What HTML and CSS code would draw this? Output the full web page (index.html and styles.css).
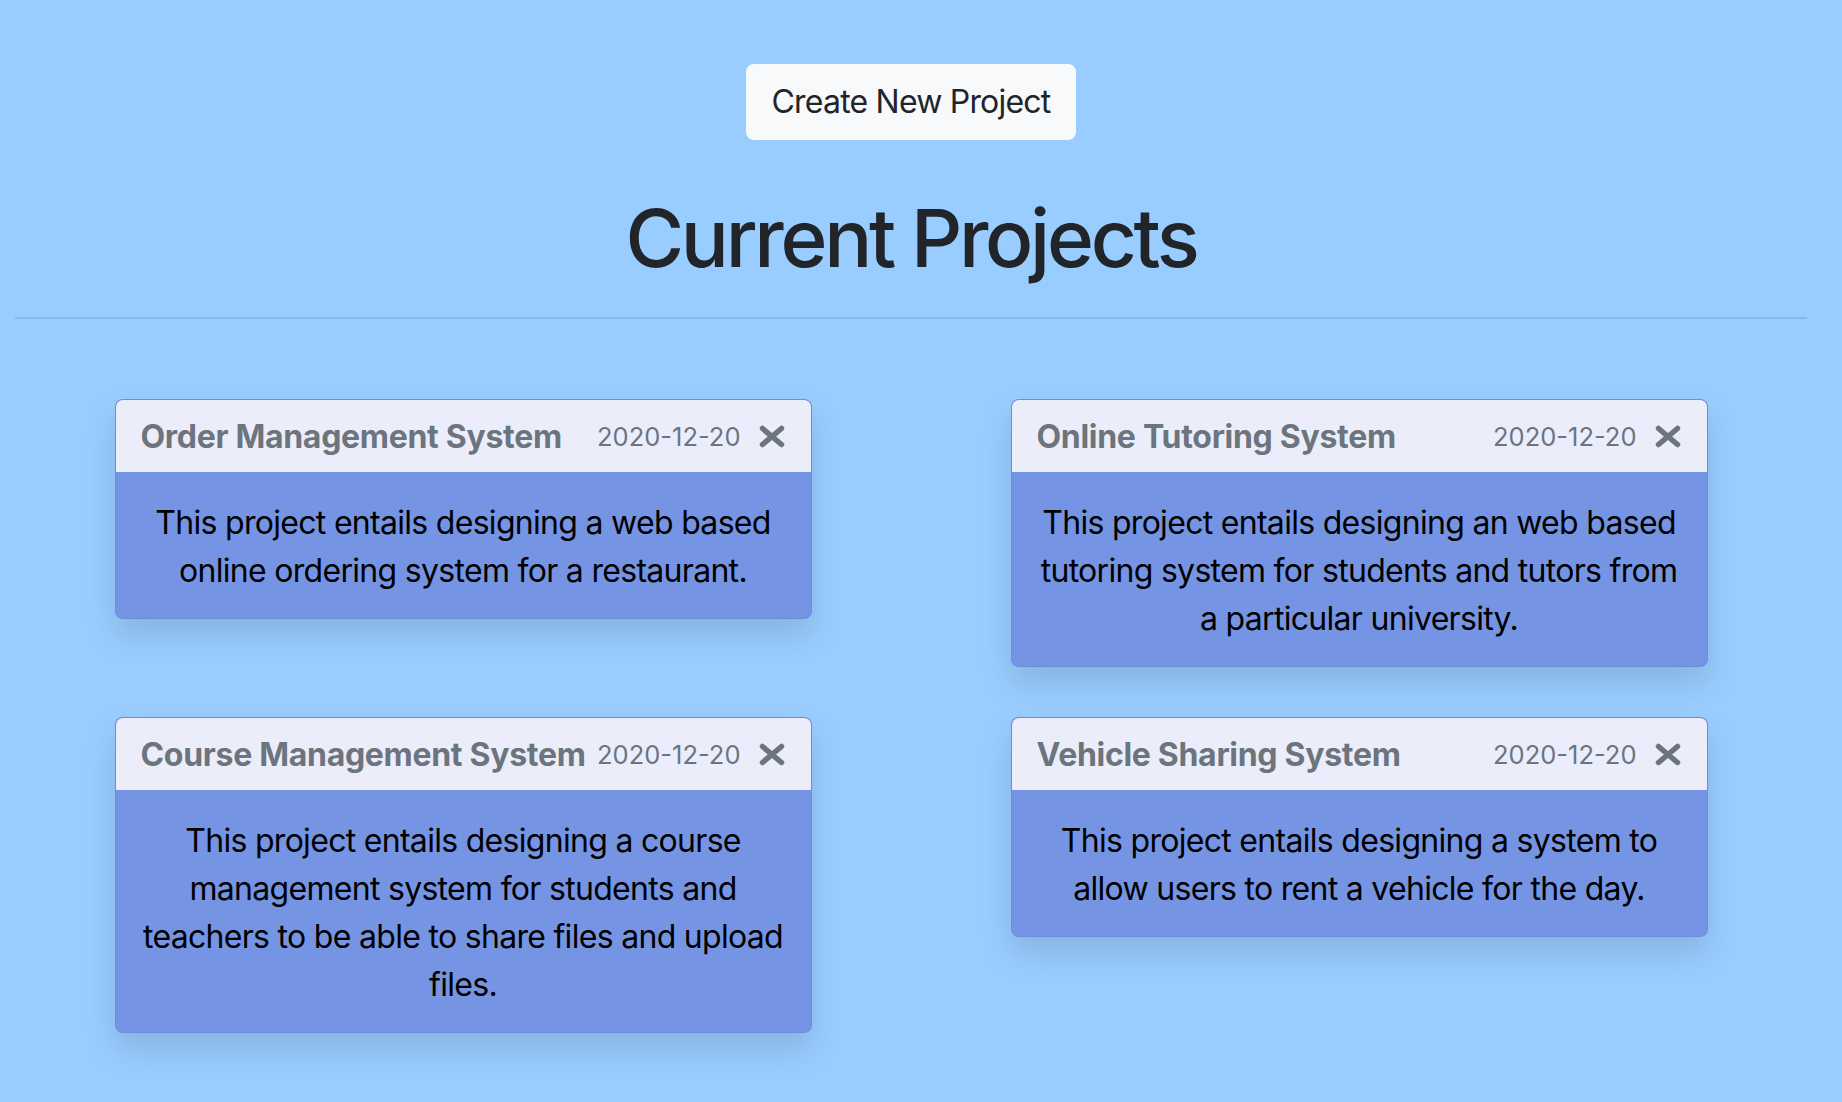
FILE: index.html
```html
<!DOCTYPE html>
<html lang="en">
<head>
<meta charset="utf-8">
<title>Current Projects</title>
<link rel="stylesheet" href="styles.css">
</head>
<body>
<div class="page">
  <div class="top">
    <button class="btn" type="button">Create New Project</button>
  </div>
  <h1 class="title">Current Projects</h1>
  <hr class="rule">
  <div class="grid">
    <div class="card">
      <div class="card-header">
        <span class="card-title">Order Management System</span>
        <span class="card-date">2020-12-20</span>
        <svg class="close" width="26" height="23" viewBox="0 0 26 23"><path d="M3.5 3.5 L22.5 19.5 M22.5 3.5 L3.5 19.5" stroke="#6c757d" stroke-width="5.5" stroke-linecap="round" fill="none"/></svg>
      </div>
      <div class="card-body">This project entails designing a web based online ordering system for a restaurant.</div>
    </div>
    <div class="card">
      <div class="card-header">
        <span class="card-title">Online Tutoring System</span>
        <span class="card-date">2020-12-20</span>
        <svg class="close" width="26" height="23" viewBox="0 0 26 23"><path d="M3.5 3.5 L22.5 19.5 M22.5 3.5 L3.5 19.5" stroke="#6c757d" stroke-width="5.5" stroke-linecap="round" fill="none"/></svg>
      </div>
      <div class="card-body">This project entails designing an web based tutoring system for students and tutors from a particular university.</div>
    </div>
    <div class="card">
      <div class="card-header">
        <span class="card-title">Course Management System</span>
        <span class="card-date">2020-12-20</span>
        <svg class="close" width="26" height="23" viewBox="0 0 26 23"><path d="M3.5 3.5 L22.5 19.5 M22.5 3.5 L3.5 19.5" stroke="#6c757d" stroke-width="5.5" stroke-linecap="round" fill="none"/></svg>
      </div>
      <div class="card-body">This project entails designing a course management system for students and teachers to be able to share files and upload files.</div>
    </div>
    <div class="card">
      <div class="card-header">
        <span class="card-title">Vehicle Sharing System</span>
        <span class="card-date">2020-12-20</span>
        <svg class="close" width="26" height="23" viewBox="0 0 26 23"><path d="M3.5 3.5 L22.5 19.5 M22.5 3.5 L3.5 19.5" stroke="#6c757d" stroke-width="5.5" stroke-linecap="round" fill="none"/></svg>
      </div>
      <div class="card-body">This project entails designing a system to allow users to rent a vehicle for the day.</div>
    </div>
  </div>
</div>
</body>
</html>
```
FILE: styles.css
```css
html, body {
  margin: 0;
  padding: 0;
}

body {
  background: #99ccff;
  font-family: Inter, "Noto Sans", "Liberation Sans", sans-serif;
  color: #212529;
  min-height: 1102px;
}

.page {
  margin-right: 20px;
  padding: 64px 15px 0;
}

.top {
  display: flex;
  justify-content: center;
}

.btn {
  font-family: inherit;
  font-size: 32px;
  line-height: 48px;
  letter-spacing: -0.8px;
  padding: 12px 24px;
  border: 2px solid #f8f9fa;
  background: #f8f9fa;
  color: #212529;
  border-radius: 8px;
}

.title {
  margin: 50px 0 31px;
  text-align: center;
  font-size: 80px;
  font-weight: 500;
  line-height: 96px;
  letter-spacing: -3.3px;
  color: #212529;
}

.rule {
  margin: 0;
  border: 0;
  border-top: 2px solid rgba(0, 0, 0, 0.1);
  height: 0;
}

.grid {
  display: grid;
  grid-template-columns: 1fr 1fr;
  row-gap: 50px;
  margin-top: 80px;
  align-items: start;
  justify-items: center;
}

.card {
  width: 697px;
  box-sizing: border-box;
  border: 1px solid rgba(40, 90, 150, 0.12);
  border-radius: 8px;
  overflow: hidden;
  box-shadow: 0 16px 32px rgba(0, 0, 0, 0.12);
  background: #7595e4;
}

.card-header {
  height: 72px;
  display: flex;
  align-items: center;
  padding: 0 26px 0 25px;
  background: #ebeefa;
}

.card-title {
  flex: 1;
  min-width: 0;
  white-space: nowrap;
  font-size: 32px;
  font-weight: 700;
  letter-spacing: -0.3px;
  color: #6c757d;
}

.card-date {
  font-size: 25.5px;
  color: #6c757d;
  white-space: nowrap;
}

.close {
  margin-left: 18px;
  flex: none;
}

.card-body {
  padding: 27px 18px 23px;
  font-size: 32px;
  line-height: 48px;
  letter-spacing: -0.7px;
  text-align: center;
  color: #000;
}
```
